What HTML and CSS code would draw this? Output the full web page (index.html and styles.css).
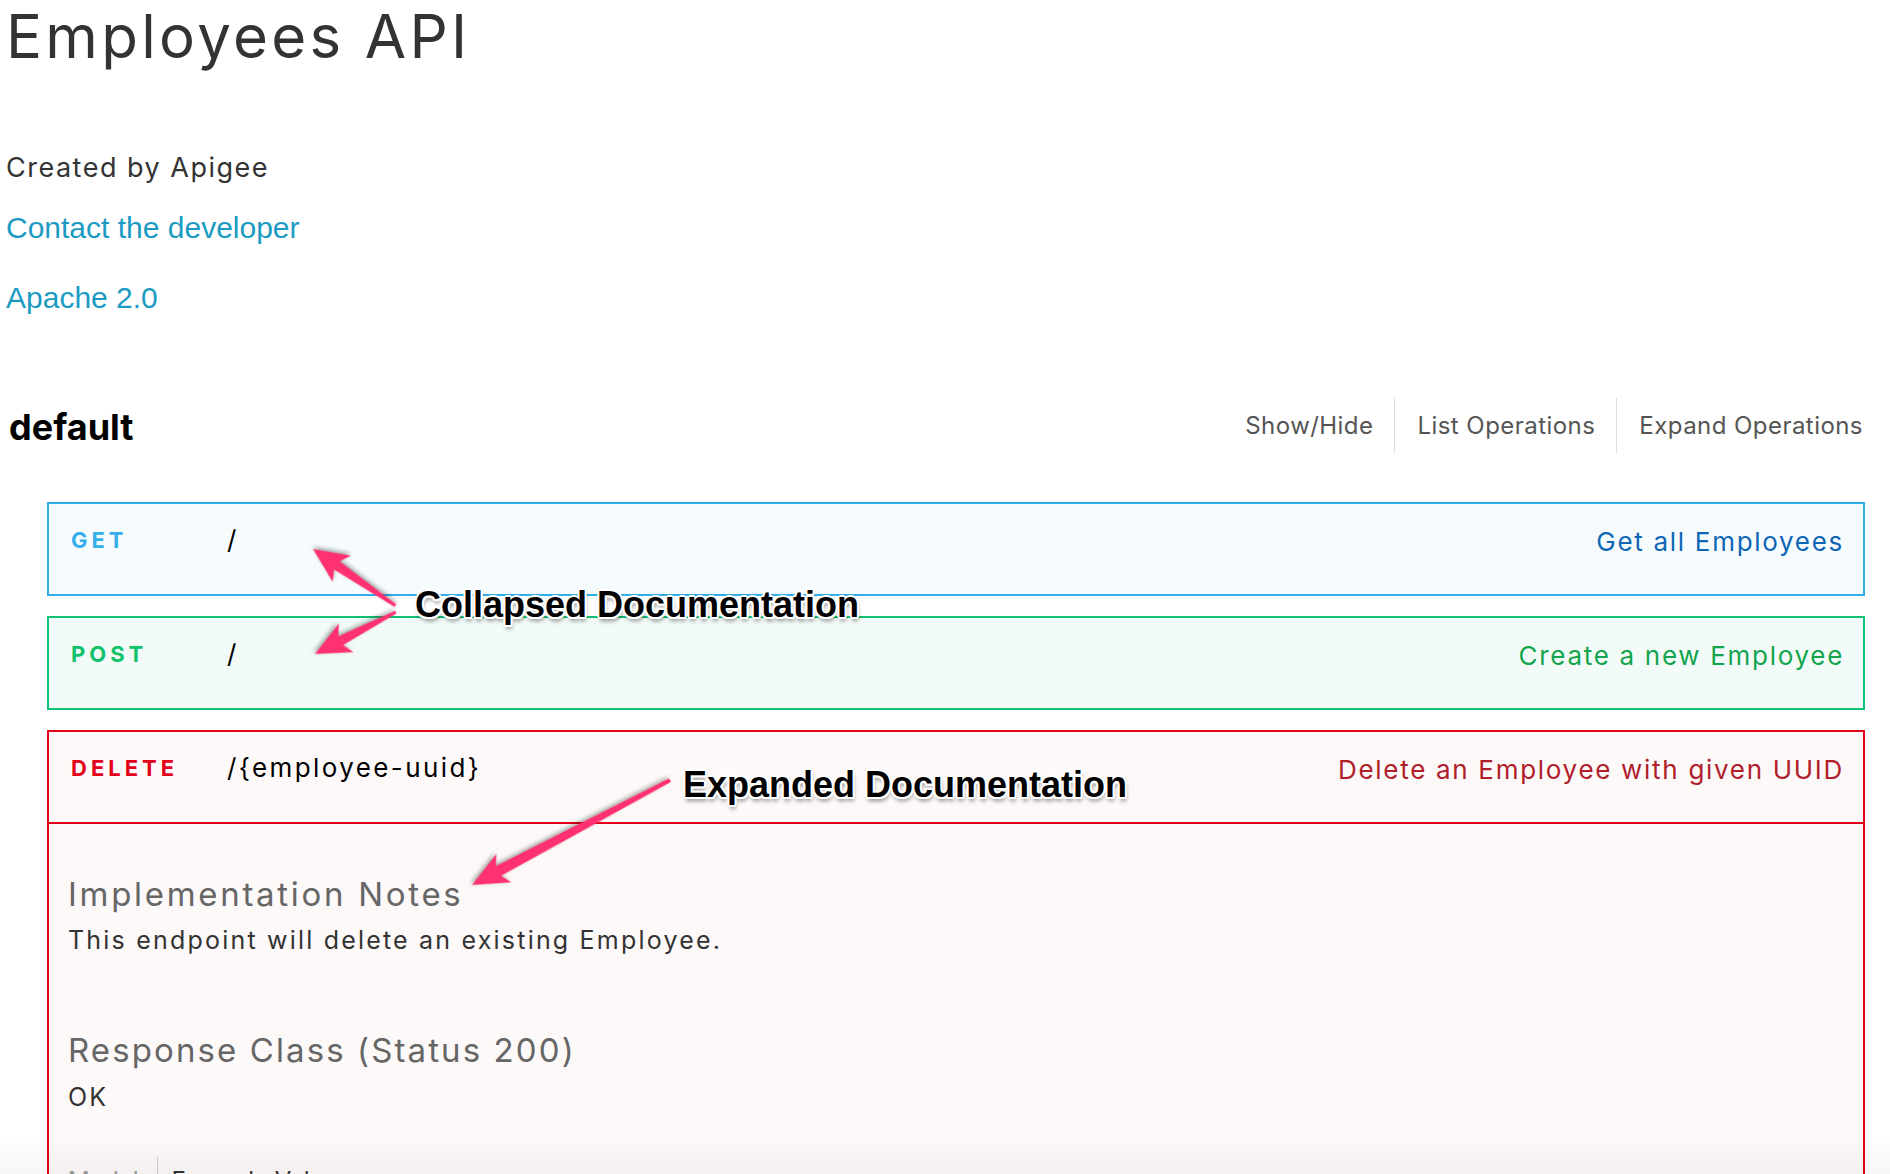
FILE: index.html
```html
<!DOCTYPE html>
<html lang="en">
<head>
<meta charset="utf-8">
<title>Employees API</title>
<link rel="stylesheet" href="styles.css">
</head>
<body>
<div class="page">
  <div class="info">
    <h2 class="info-title">Employees API</h2>
    <div class="info-desc">Created by Apigee</div>
    <div class="info-contact"><a href="#">Contact the developer</a></div>
    <div class="info-license"><a href="#">Apache 2.0</a></div>
  </div>

  <div class="resource-header">
    <h2 class="resource-name">default</h2>
    <ul class="ops-links">
      <li>Show/Hide</li>
      <li>List Operations</li>
      <li>Expand Operations</li>
    </ul>
  </div>

  <ul class="endpoints">
    <li class="op op-get">
      <div class="op-header">
        <span class="op-method">GET</span>
        <span class="op-path">/</span>
        <span class="op-summary">Get all Employees</span>
      </div>
    </li>
    <li class="op op-post">
      <div class="op-header">
        <span class="op-method">POST</span>
        <span class="op-path">/</span>
        <span class="op-summary">Create a new Employee</span>
      </div>
    </li>
    <li class="op op-delete">
      <div class="op-header">
        <span class="op-method">DELETE</span>
        <span class="op-path">/{employee-uuid}</span>
        <span class="op-summary">Delete an Employee with given UUID</span>
      </div>
      <div class="op-content">
        <h4 class="content-title">Implementation Notes</h4>
        <p class="content-text">This endpoint will delete an existing Employee.</p>
        <h4 class="content-title response-title">Response Class (Status 200)</h4>
        <p class="content-text ok-text">OK</p>
        <div class="model-tabs">
          <span class="tab tab-model">Model</span>
          <span class="tab tab-example">Example Value</span>
        </div>
      </div>
    </li>
  </ul>
</div>

<div class="annotations">
  <svg class="arrows" width="1890" height="1174" viewBox="0 0 1890 1174">
    <g class="arrow" transform="translate(313 549) rotate(-145.5)">
      <polygon points="0,0 -35,-16 -29,-5 -100,-1.5 -100,1.5 -29,5 -35,16"/>
    </g>
    <g class="arrow" transform="translate(315 654) rotate(152.6)">
      <polygon points="0,0 -35,-16 -29,-5 -91,-1.5 -91,1.5 -29,5 -35,16"/>
    </g>
    <g class="arrow" transform="translate(472 885) rotate(152.1)">
      <polygon points="0,0 -36,-16 -30,-5.5 -224,-2 -224,2 -30,5.5 -36,16"/>
    </g>
  </svg>
  <div class="note note-collapsed">Collapsed Documentation</div>
  <div class="note note-expanded">Expanded Documentation</div>
</div>
<div class="bottom-fade"></div>
</body>
</html>
```

FILE: styles.css
```css
html, body {
  margin: 0;
  padding: 0;
  background: #ffffff;
}

body {
  font-family: Inter, "Noto Sans", sans-serif;
  color: #333333;
  overflow: hidden;
  position: relative;
  width: 1890px;
  height: 1174px;
}

.page {
  padding: 0 25px 0 6px;
}

.info-title {
  margin: 0;
  font-size: 60px;
  line-height: 72px;
  font-weight: 400;
  letter-spacing: 3.3px;
  color: #333333;
}

.info-desc {
  margin-top: 78px;
  font-size: 27px;
  line-height: 36px;
  letter-spacing: 1.5px;
  color: #333333;
}

.info-contact,
.info-license {
  font-family: "Liberation Sans", Arial, sans-serif;
  font-size: 30px;
  line-height: 36px;
}

.info-contact {
  margin-top: 24px;
}

.info-license {
  margin-top: 34px;
}

.info-contact a,
.info-license a {
  color: #1c9bc2;
  text-decoration: none;
}

.resource-header {
  margin-top: 82px;
  display: flex;
  justify-content: space-between;
  align-items: flex-start;
  height: 55px;
}

.resource-name {
  margin: 0;
  padding-left: 3px;
  font-size: 36px;
  line-height: 55px;
  font-weight: 700;
  color: #000000;
  position: relative;
  top: 2px;
}

.ops-links {
  list-style: none;
  margin: 0;
  padding: 0;
  display: flex;
}

.ops-links li {
  font-size: 24px;
  line-height: 55px;
  letter-spacing: 0.45px;
  color: #555555;
  padding: 0 21px 0 22px;
  border-left: 1px solid #dddddd;
}

.ops-links li:first-child {
  border-left: none;
}

.ops-links li:last-child {
  padding-right: 2px;
}

.endpoints {
  list-style: none;
  margin: 49px 0 0 41px;
  padding: 0;
}

.op {
  border: 2px solid;
  margin-bottom: 20px;
}

.op-header {
  height: 90px;
  box-sizing: border-box;
  display: flex;
  align-items: flex-start;
  padding: 16px 19px 0 22px;
  line-height: 40px;
}

.op-method {
  width: 156px;
  flex: none;
  font-size: 22px;
  font-weight: 700;
  letter-spacing: 4px;
}

.op-path {
  font-size: 26px;
  color: #000000;
  letter-spacing: 2.4px;
}

.op-summary {
  margin-left: auto;
  font-size: 26px;
  letter-spacing: 1.7px;
  position: relative;
  top: 2px;
}

.op-get {
  border-color: #31aee9;
  background: #f6fbfe;
}
.op-get .op-method { color: #36aeea; }
.op-get .op-summary { color: #0f66b5; }

.op-post {
  border-color: #12c274;
  background: #f2fbf8;
}
.op-post .op-method { color: #10c26b; }
.op-post .op-summary { color: #13a44d; }

.op-delete {
  border-color: #e4001c;
  background: #fdf9f9;
}
.op-delete .op-header {
  border-bottom: 2px solid #e4001c;
  height: 92px;
}
.op-delete .op-method { color: #e3001b; }
.op-delete .op-summary { color: #b0202b; }

.op-content {
  padding: 50px 22px 0 19px;
  height: 400px;
}

.content-title {
  margin: 0;
  font-size: 33px;
  line-height: 40px;
  font-weight: 400;
  letter-spacing: 2.7px;
  color: #666666;
}

.content-text {
  margin: 10px 0 0;
  font-size: 25px;
  line-height: 32px;
  letter-spacing: 2.2px;
  color: #333333;
}

.response-title {
  margin-top: 74px;
  letter-spacing: 2.1px;
}

.ok-text {
  margin-top: 11px;
}

.model-tabs {
  margin-top: 44px;
  display: flex;
  font-size: 24px;
  line-height: 32px;
}

.tab {
  padding-top: 8px;
}

.tab-model {
  color: #999999;
  padding-right: 18px;
  border-right: 1px solid #cccccc;
}

.tab-example {
  color: #333333;
  padding-left: 14px;
}

.annotations {
  position: absolute;
  left: 0;
  top: 0;
  width: 1890px;
  height: 1174px;
  pointer-events: none;
}

.arrows {
  position: absolute;
  left: 0;
  top: 0;
}

.arrow polygon {
  fill: #ff3170;
}

.arrow {
  filter: drop-shadow(1px 2px 2px rgba(0, 0, 0, 0.35));
}

.note {
  position: absolute;
  font-family: "Liberation Sans", Arial, sans-serif;
  font-weight: 700;
  font-size: 36px;
  line-height: 36px;
  color: #000000;
  white-space: nowrap;
  text-shadow:
    2px 0 0 #fff, -2px 0 0 #fff, 0 2px 0 #fff, 0 -2px 0 #fff,
    1.5px 1.5px 0 #fff, -1.5px -1.5px 0 #fff, 1.5px -1.5px 0 #fff, -1.5px 1.5px 0 #fff,
    1px 4px 4px rgba(0, 0, 0, 0.45);
}

.note-collapsed {
  left: 415px;
  top: 587px;
}

.note-expanded {
  left: 683px;
  top: 767px;
}

.bottom-fade {
  position: absolute;
  left: 0;
  bottom: 0;
  width: 1890px;
  height: 40px;
  background: linear-gradient(to bottom, rgba(0, 0, 0, 0), rgba(0, 0, 0, 0.035));
  pointer-events: none;
}
```
